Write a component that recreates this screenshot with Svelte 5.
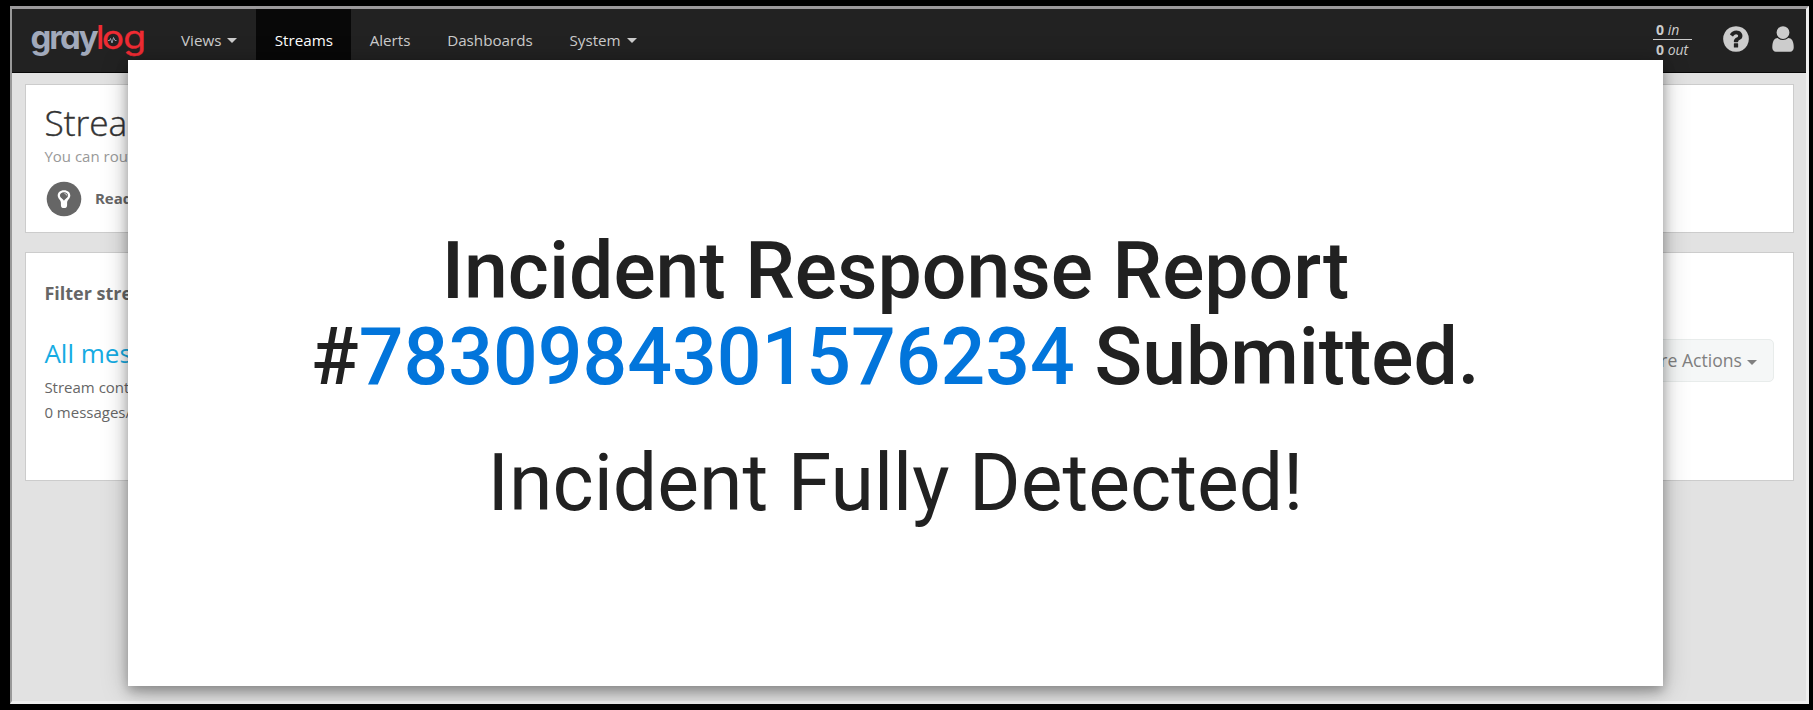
<script>
  const links = [
    { label: 'Views', caret: true },
    { label: 'Streams', active: true },
    { label: 'Alerts' },
    { label: 'Dashboards' },
    { label: 'System', caret: true }
  ];
</script>

<div class="screen">
  <div class="window">
    <nav>
      <svg class="logo" width="118" height="48" viewBox="0 0 118 48" aria-label="graylog">
        <text x="-.5" y="32" fill="#a1a9bb" font-weight="700" letter-spacing="-2">gray</text>
        <text x="65" y="32" fill="#ef2b33" font-weight="500">l</text>
        <text transform="translate(70.800 32) scale(1.130 1)" fill="#ef2b33" font-weight="400" letter-spacing="-.7" stroke="#ef2b33" stroke-width=".3">og</text>
        <path d="M77 23.500h1.500l1-2 1.500 4.500 1.500-5.500 1.500 3h1.500" fill="none" stroke="#a1a9bb" stroke-width=".9" />
      </svg>
      <div class="links">
        {#each links as link}
          <div class="link" class:active={link.active}>
            <span>{link.label}</span>
            {#if link.caret}<i class="caret"></i>{/if}
          </div>
        {/each}
      </div>
      <div class="throughput">
        <div><b>0</b> <em>in</em></div>
        <div><b>0</b> <em>out</em></div>
      </div>
      <svg class="help" width="30" height="30" viewBox="0 0 1792 1792" fill="#ccc"><path d="M1024 1376v-192q0-14-9-23t-23-9h-192q-14 0-23 9t-9 23v192q0 14 9 23t23 9h192q14 0 23-9t9-23zm256-672q0-88-55.500-163t-138.500-116-170-41q-243 0-371 213-15 24 8 42l132 100q7 6 19 6 16 0 25-12 53-68 86-92 34-24 86-24 48 0 85.500 26t37.500 59q0 38-20 61t-68 45q-63 28-115.500 86.500t-52.500 125.500v36q0 14 9 23t23 9h192q14 0 23-9t9-23q0-19 21.500-49.500t54.500-49.500q32-18 49-28.500t46-35 44.500-48 28-60.500 12.500-81zm384 192q0 209-103 385.500t-279.500 279.500-385.500 103-385.500-103-279.500-279.500-103-385.500 103-385.500 279.500-279.500 385.500-103 385.500 103 279.500 279.500 103 385.500z" /></svg>
      <svg class="user" width="30" height="30" viewBox="0 0 1792 1792" fill="#ccc"><path d="M1536 1399q0 109-62.500 187t-150.500 78h-854q-88 0-150.500-78t-62.500-187q0-85 8.500-160.500t31.500-152 58.500-131 94-89 134.500-34.500q131 128 313 128t313-128q76 0 134.500 34.500t94 89 58.500 131 31.500 152 8.500 160.500zm-256-887q0 159-112.500 271.500t-271.500 112.500-271.500-112.500-112.500-271.500 112.500-271.500 271.500-112.500 271.500 112.500 112.500 271.500z" /></svg>
    </nav>

    <main>
      <section class="card intro">
        <h1>Streams</h1>
        <p class="lead">You can route</p>
        <div class="hint">
          <svg width="36" height="36" viewBox="0 0 36 36">
            <circle cx="18" cy="18" r="17.300" fill="#666" />
            <path d="M18 9.200c-3.900 0-6.300 2.300-6.300 5.200 0 3.200 3.200 4.300 3.200 7.300v2.500c0 2 1.200 2.900 3.100 2.900s3.100-.900 3.100-2.900v-2.500c0-3 3.200-4.100 3.200-7.300 0-2.900-2.400-5.200-6.300-5.200z" fill="#fff" />
            <path d="M18 11.200c-2.500 0-4.100 1.400-4.100 3.300 0 2.300 3.400 3.500 4.100 5.300.700-1.800 4.100-3 4.100-5.300 0-1.900-1.600-3.300-4.100-3.300z" fill="#666" />
            <path d="M18.500 12.500q2.200.200 2.500 2.200" fill="none" stroke="#eee" stroke-width=".8" />
          </svg>
          <strong>Read</strong>
        </div>
      </section>

      <section class="card list">
        <div>
          <h3>Filter streams</h3>
          <h2>All messages</h2>
          <p>Stream contains</p>
          <p>0 messages/second</p>
        </div>
        <button>More Actions<i class="caret"></i></button>
      </section>
    </main>
  </div>

  <div class="modal">
    <p class="title">Incident Response Report<br />#<span>7830984301576234</span> Submitted.</p>
    <p class="status">Incident Fully Detected!</p>
  </div>
</div>

<style>
  :global(body) { background: #000; }
  * { box-sizing: border-box; }
  .screen {
    position: relative;
    width: 1813px;
    height: 710px;
    padding: 6px 4px 6px 10px;
    background: #000;
    overflow: hidden;
    font-family: 'Open Sans', sans-serif;
  }
  .window {
    height: 698px;
    border: solid;
    border-width: 3px 3px 3px 2px;
    border-color: #9b999b #eee #eee #999;
    background: #e2e2e2;
  }
  nav {
    display: flex;
    align-items: flex-start;
    height: 64px;
    padding-left: 19px;
    background: #222;
    border-bottom: 1px solid #080808;
    color: #ccc;
  }
  .logo {
    margin-top: 8px;
    flex: none;
    font-family: Inter, sans-serif;
    font-size: 33px;
    font-feature-settings: 'cv11';
  }
  .links { display: flex; height: 63px; margin-left: 13px; }
  .link {
    display: flex;
    align-items: center;
    padding: 0 17.700px 2px 19px;
    font-size: 15.200px;
    height: 63px;
  }
  .active { background: #080808; color: #fff; }
  .caret {
    display: inline-block;
    border: solid transparent;
    border-width: 5px 5px 0;
    border-top-color: currentColor;
  }
  .link .caret { margin: 2px 0.600px 0 6px; }
  .throughput { margin: 14px 0 0 auto; width: 39px; font-size: 14px; white-space: nowrap; }
  .throughput div { height: 18px; line-height: 20px; padding-left: 3px; }
  .throughput div:first-child { height: 17px; border-bottom: 1px solid #ccc; line-height: 14px; }
  .help { margin: 14.500px 0 0 29px; }
  .user { margin: 14.500px 8px 0 17px; }
  main { padding: 11px 12px 0 13px; }
  .card { border: 1px solid #ccc; background: #fff; padding: 0 19px 0 18.400px; }
  .intro { height: 149px; }
  h1, h2, h3, p { margin: 0; white-space: nowrap; }
  h1 {
    font-size: 35.300px;
    line-height: 40px;
    font-weight: 300;
    color: #333;
    margin-top: 17px;
    -webkit-text-stroke: 0.4px #333;
  }
  .lead { font-size: 15px; line-height: 20px; color: #999; margin-top: 4px; }
  .hint { display: flex; align-items: center; gap: 12.500px; margin: 15px 0 0 2px; color: #666; font-size: 15px; }
  .hint strong { margin-bottom: 2px; }
  .list { display: flex; justify-content: space-between; height: 229px; margin-top: 19px; color: #666; }
  h3 { font-size: 18px; line-height: 24px; padding-top: 28px; }
  h2 { font-size: 26px; line-height: 32px; font-weight: 400; color: #16ace3; margin-top: 32px; }
  .list p { font-size: 15px; line-height: 25px; }
  .list h2 + p { margin-top: 6px; }
  button {
    height: 43px;
    margin-top: 86px;
    padding: 0 16px 2px;
    border: 1px solid #e8eceb;
    border-radius: 5px;
    background: #f5f7f7;
    color: #808080;
    font: 17.600px 'Open Sans', sans-serif;
  }
  button .caret { margin: 0 0 2px 5px; }
  .modal {
    position: absolute;
    left: 128px;
    top: 60px;
    width: 1535px;
    height: 626px;
    padding-top: 168px;
    background: #fff;
    box-shadow: 0 5px 11px rgba(0, 0, 0, 0.28), 0 4px 25px rgba(0, 0, 0, 0.25);
    font-family: Roboto, sans-serif;
    font-size: 78.750px;
    line-height: 86px;
    color: #212121;
    text-align: center;
  }
  .title { font-weight: 500; }
  .title span { color: #0275db; }
  .status { margin-top: 40px; font-weight: 400; }
</style>
